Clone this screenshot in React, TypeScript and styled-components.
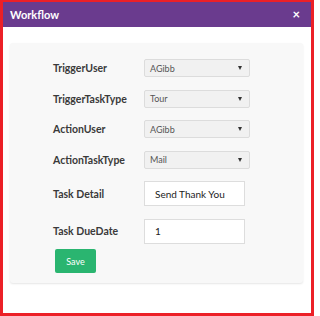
import { Fragment } from "react";
import styled, { createGlobalStyle } from "styled-components";

const GlobalStyle = createGlobalStyle`
  html, body {
    margin: 0;
    padding: 0;
    background: #ffffff;
  }
  body {
    font-family: Lato, "Open Sans", "Liberation Sans", sans-serif;
  }
`;

const Frame = styled.div`
  width: 314px;
  height: 316px;
  box-sizing: border-box;
  border: 3px solid #ec2027;
  border-top-width: 2px;
  background: #ffffff;
  display: flex;
  flex-direction: column;
`;

const Header = styled.div`
  height: 25px;
  background: #6a3b8e;
  display: flex;
  align-items: center;
  justify-content: space-between;
  padding: 0 11px 0 7px;
  color: #ffffff;
`;

const Title = styled.span`
  font-size: 11px;
  font-weight: 700;
`;

const Close = styled.span`
  font-size: 13px;
  font-weight: 700;
  line-height: 1;
`;

const Body = styled.div`
  padding: 16px 8px 0 7px;
`;

const Panel = styled.div`
  background: #f8f8f8;
  border-radius: 3px;
  box-shadow: 0 1px 2px rgba(0, 0, 0, 0.1);
  padding: 16px 0 10px 43px;
`;

const Form = styled.div`
  display: grid;
  grid-template-columns: 91px 106px;
  row-gap: 12.5px;
  align-items: center;
`;

const Label = styled.label`
  font-size: 10.5px;
  font-weight: 700;
  color: #3a3a3a;
`;

const Select = styled.div`
  height: 18px;
  box-sizing: border-box;
  border: 1px solid #dcdcdc;
  border-radius: 2px;
  background: #f1f1f1;
  display: flex;
  align-items: center;
  justify-content: space-between;
  padding: 0 7px 0 5px;
  font-size: 9px;
  color: #555555;
`;

const Caret = styled.span`
  width: 0;
  height: 0;
  border-left: 2.5px solid transparent;
  border-right: 2.5px solid transparent;
  border-top: 4px solid #333333;
`;

const Input = styled.div`
  height: 25px;
  width: 101px;
  box-sizing: border-box;
  border: 1px solid #dddddd;
  background: #ffffff;
  display: flex;
  align-items: center;
  padding-left: 10px;
  font-size: 10px;
  color: #222222;
`;

const SaveButton = styled.button`
  margin: 5.5px 0 0 2px;
  width: 41px;
  height: 24px;
  border: none;
  border-radius: 2px;
  background: #2ab570;
  color: #ffffff;
  font-family: inherit;
  font-size: 9px;
  padding: 0;
`;

const selects = [
  { label: "TriggerUser", value: "AGibb" },
  { label: "TriggerTaskType", value: "Tour" },
  { label: "ActionUser", value: "AGibb" },
  { label: "ActionTaskType", value: "Mail" },
];

const inputs = [
  { label: "Task Detail", value: "Send Thank You" },
  { label: "Task DueDate", value: "1" },
];

export default function App() {
  return (
    <>
      <GlobalStyle />
      <Frame>
        <Header>
          <Title>Workflow</Title>
          <Close>×</Close>
        </Header>
        <Body>
          <Panel>
            <Form>
              {selects.map((s) => (
                <Fragment key={s.label}>
                  <Label>{s.label}</Label>
                  <Select>
                    {s.value}
                    <Caret />
                  </Select>
                </Fragment>
              ))}
              {inputs.map((i) => (
                <Fragment key={i.label}>
                  <Label>{i.label}</Label>
                  <Input>{i.value}</Input>
                </Fragment>
              ))}
            </Form>
            <SaveButton>Save</SaveButton>
          </Panel>
        </Body>
      </Frame>
    </>
  );
}
